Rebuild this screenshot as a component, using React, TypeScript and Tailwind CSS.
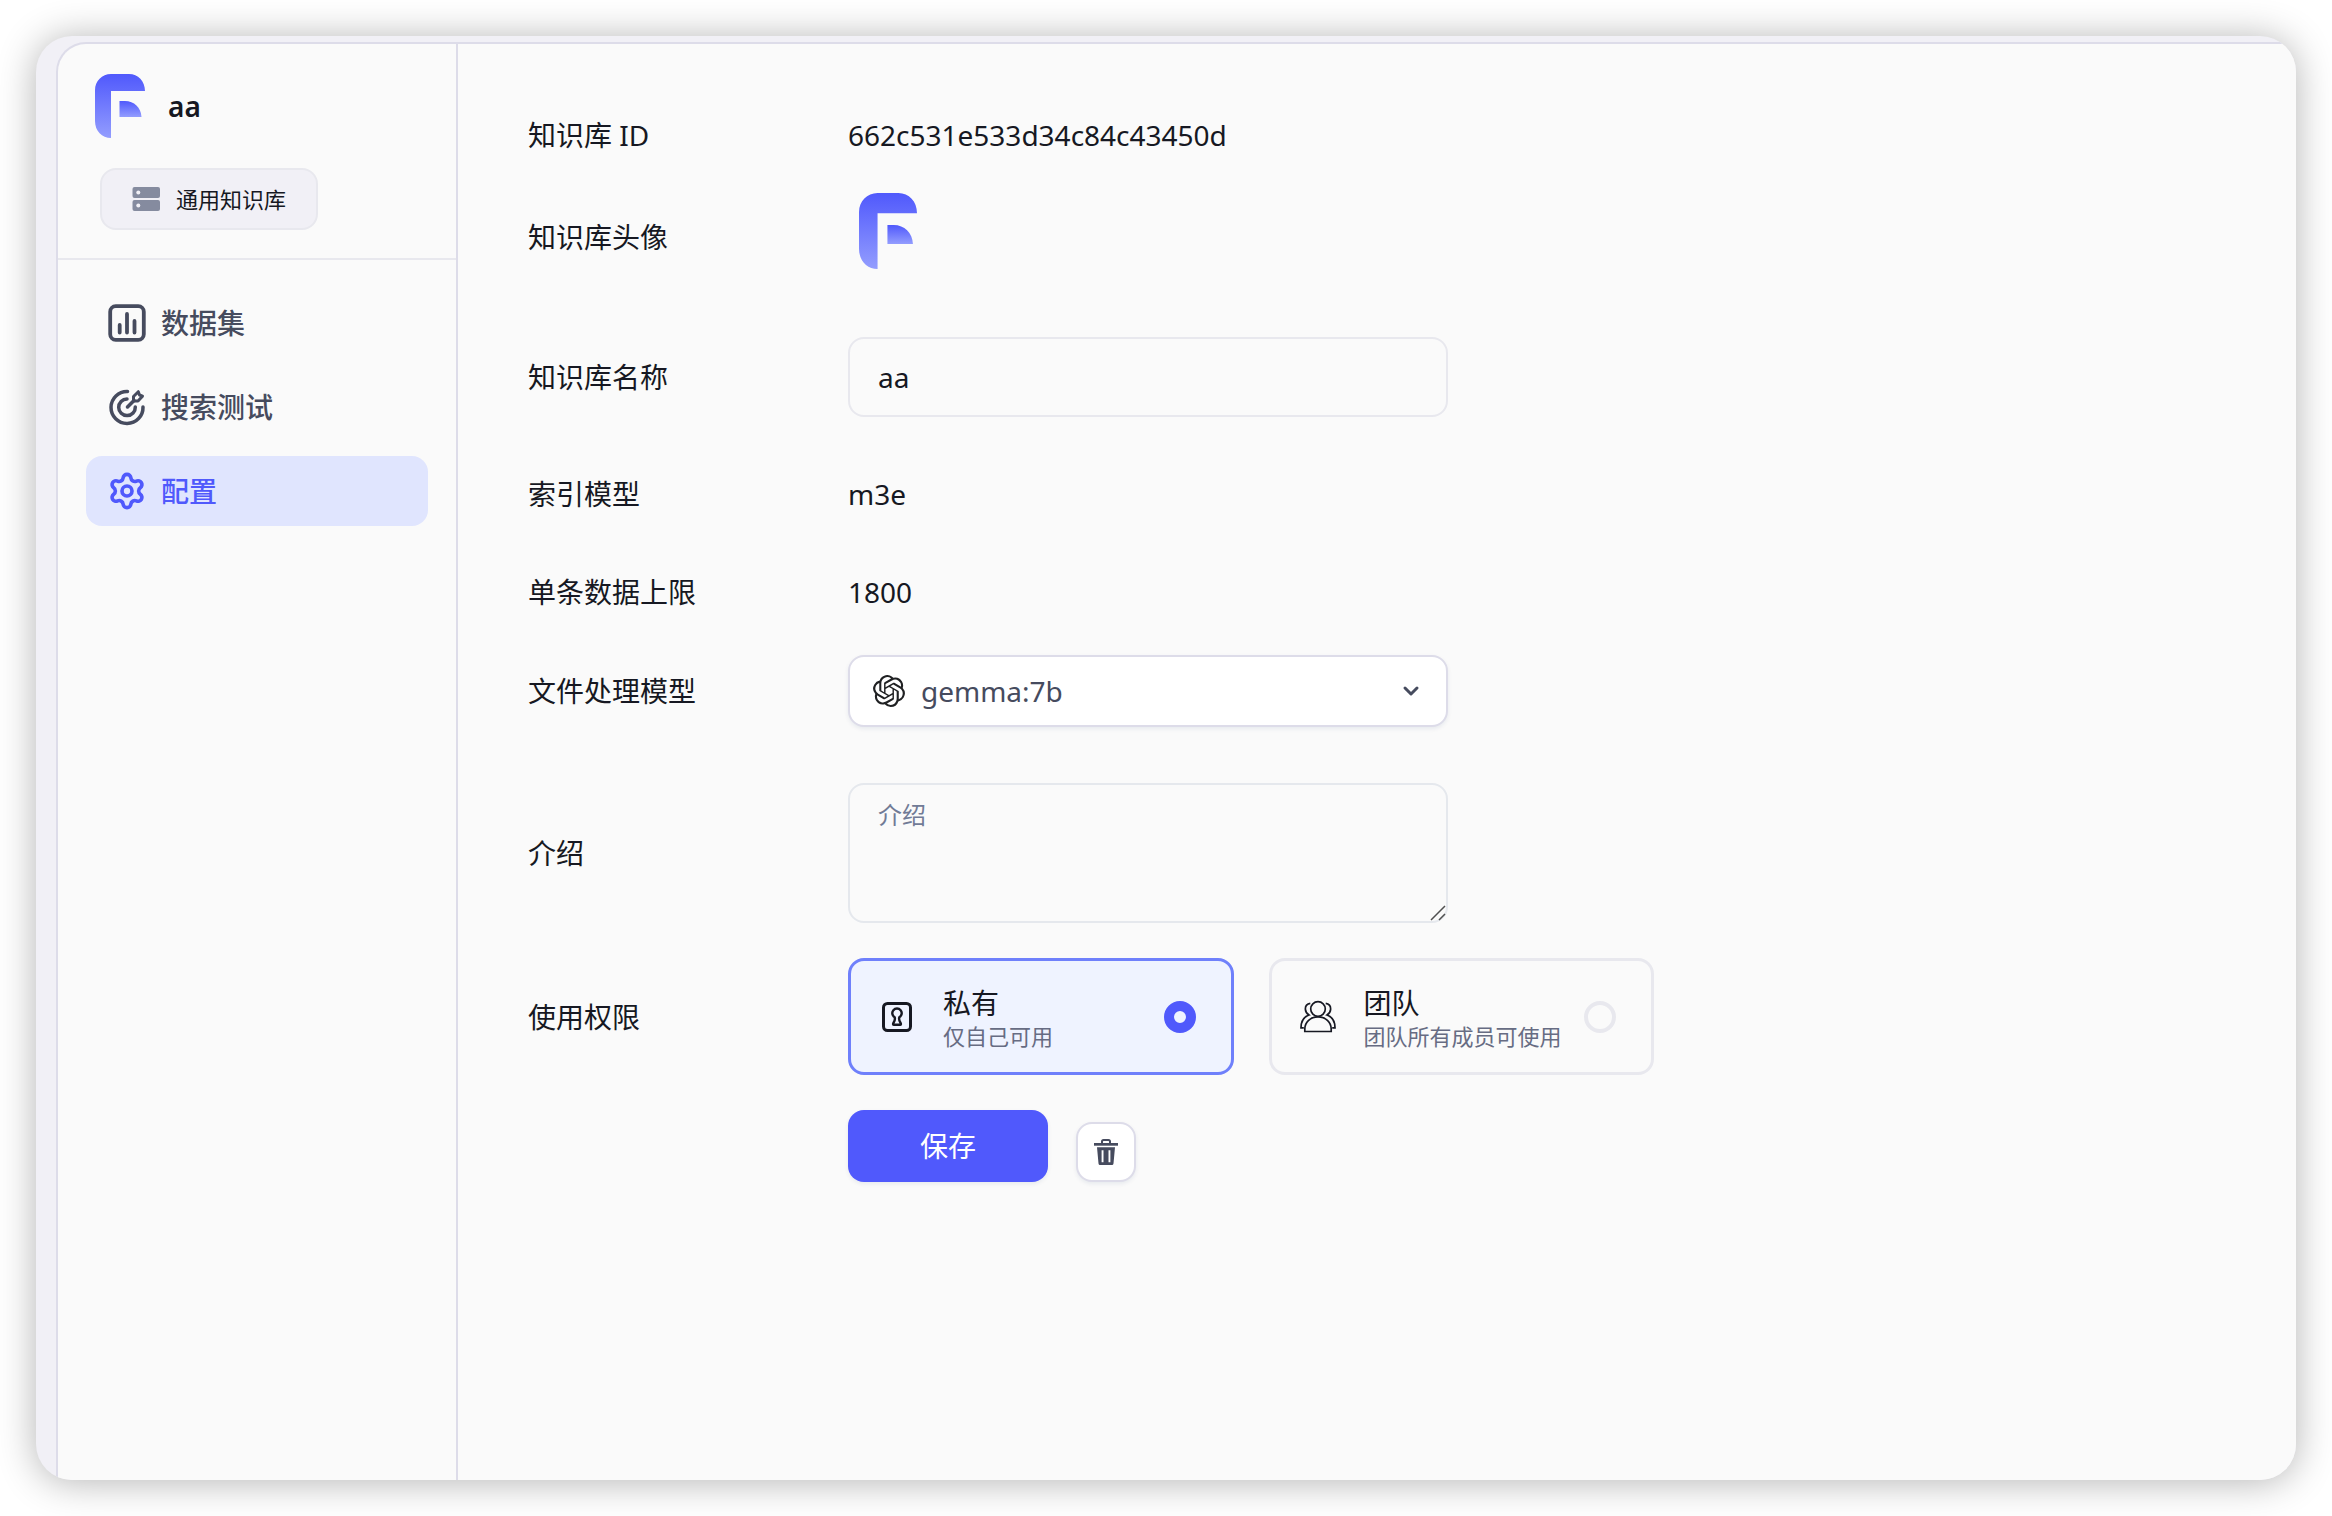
import { useId, useState } from 'react';
import type { ReactNode } from 'react';
import clsx from 'clsx';
import { ChevronDown, Settings } from 'lucide-react';
import { SiOpenai } from 'react-icons/si';

type IconProps = { className?: string };

function Logo({ className }: IconProps) {
  const id = useId();

  return (
    <svg className={className} viewBox="0 0 50 64" preserveAspectRatio="none" fill="none" aria-hidden="true">
      <path d="M0 16C0 7 7 0 16 0H34C43 0 50 7 50 17H16V64C7 64 0 57 0 47Z" fill={`url(#${id}a)`} />
      <path d="M24.5 27H30C39 27 46 33.5 46.5 43H24.5Z" fill={`url(#${id}b)`} />
      <defs>
        <linearGradient id={`${id}a`} x1="25" y1="0" x2="25" y2="64" gradientUnits="userSpaceOnUse">
          <stop stopColor="#5059fc" />
          <stop offset="1" stopColor="#939dfe" />
        </linearGradient>
        <linearGradient id={`${id}b`} x1="35" y1="27" x2="35" y2="43" gradientUnits="userSpaceOnUse">
          <stop stopColor="#5059fc" />
          <stop offset="1" stopColor="#939dfe" />
        </linearGradient>
      </defs>
    </svg>
  );
}

function DatabaseIcon({ className }: IconProps) {
  return (
    <svg className={className} viewBox="0 0 28 24" fill="currentColor" aria-hidden="true">
      <rect x="0.5" y="0" width="27.5" height="11" rx="2" />
      <rect x="0.5" y="13" width="27.5" height="11" rx="2" />
      <circle cx="6.3" cy="5.5" r="2" fill="#f1f0f6" />
      <circle cx="6.3" cy="18.5" r="2" fill="#f1f0f6" />
    </svg>
  );
}

function DatasetIcon({ className }: IconProps) {
  return (
    <svg className={className} viewBox="0 0 40 40" fill="none" stroke="currentColor" strokeWidth="3.8" strokeLinecap="round" aria-hidden="true">
      <rect x="3.2" y="3.2" width="33.6" height="33.6" rx="5.5" />
      <path d="M12.7 22V29.5M20 11V29.5M27.5 18V29.5" />
    </svg>
  );
}

function TargetIcon({ className }: IconProps) {
  return (
    <svg className={className} viewBox="0 0 40 40" fill="none" stroke="currentColor" strokeWidth="3.5" strokeLinecap="round" strokeLinejoin="round" aria-hidden="true">
      <path d="M20.500 4.500A16 16 0 1 0 36 20" />
      <path d="M20 12A8.300 8.300 0 1 0 28.300 20" />
      <path d="M20.500 20L27 13.500" />
      <path d="M26.500 14V9.500L31.300 4.700L32.500 8L35.500 9.200L31 14Z" strokeWidth="3" />
    </svg>
  );
}

function LockIcon({ className }: IconProps) {
  return (
    <svg className={className} viewBox="0 0 30 30" fill="none" stroke="currentColor" strokeLinejoin="round" aria-hidden="true">
      <rect x="1.5" y="1.5" width="27" height="27" rx="4" strokeWidth="3" />
      <path d="M12.7 15.3A4.7 4.7 0 1 1 17.3 15.3C16.7 17.2 17.2 18.5 18.3 20.3C19.3 22 19 22.8 18 22.8H12C11 22.8 10.7 22 11.7 20.3C12.8 18.5 13.3 17.2 12.7 15.3Z" strokeWidth="2.4" />
    </svg>
  );
}

function TeamIcon({ className }: IconProps) {
  return (
    <svg className={className} viewBox="0 0 36 36" fill="none" stroke="currentColor" strokeWidth="1.7" aria-hidden="true">
      <circle cx="18" cy="10" r="7.3" />
      <path d="M4.8 32.5V30C4.8 23 10.5 17.8 18 17.8S31.2 23 31.2 30V32.5Z" />
      <path d="M10.3 4.4C7 5 5.2 7.6 5.4 10.4C5.5 12.8 6.8 14.6 9 16C4 17.8 1 22 1 28.8H3.8" />
      <path d="M25.7 4.4C29 5 30.8 7.6 30.6 10.4C30.5 12.8 29.2 14.6 27 16C32 17.8 35 22 35 28.800H32.200" />
    </svg>
  );
}

function TrashIcon({ className }: IconProps) {
  return (
    <svg className={className} viewBox="0 0 28 28" fill="currentColor" aria-hidden="true">
      <path d="M2 5H26V7.7H2Z" />
      <path d="M10 5.5V3.5A1.5 1.5 0 0 1 11.5 2H16.5A1.5 1.5 0 0 1 18 3.5V5.5" fill="none" stroke="currentColor" strokeWidth="2" />
      <path
        fillRule="evenodd"
        d="M5 9.3H23L21.5 25.5Q21.3 27 20 27H8Q6.7 27 6.5 25.5ZM9.6 12.3V24.3H11.5V12.3ZM16.5 12.3V24.3H18.4V12.3Z"
      />
    </svg>
  );
}

function SettingIcon({ className }: IconProps) {
  return <Settings className={className} strokeWidth={2.2} />;
}

const navItems = [
  { id: 'dataset', label: '数据集', icon: DatasetIcon },
  { id: 'test', label: '搜索测试', icon: TargetIcon },
  { id: 'info', label: '配置', icon: SettingIcon },
];

const permissions = [
  { value: 'private', title: '私有', desc: '仅自己可用', icon: LockIcon, iconClass: 'w-[30px] h-[30px] mx-[3px]' },
  { value: 'public', title: '团队', desc: '团队所有成员可使用', icon: TeamIcon, iconClass: 'w-9 h-9' },
];

function Sidebar() {
  const [current, setCurrent] = useState('info');

  return (
    <aside className="w-[400px] shrink-0 border-r-2 border-[#dddce9]">
      <div className="pt-[30px] pb-7 border-b-2 border-[#e8e8ee]">
        <div className="flex items-center gap-[23px] pl-[37px]">
          <Logo className="w-[50px] h-16" />
          <h1 className="text-[28px] leading-[42px] font-semibold">aa</h1>
        </div>
        <div className="mt-[30px] ml-[42px] inline-flex items-center gap-4 h-[62px] px-[30px] rounded-2xl border-2 border-[#e8e8ee] bg-[#f1f0f6] align-top">
          <DatabaseIcon className="w-7 h-6 text-[#858b9f]" />
          <span className="text-[22px] leading-8">通用知识库</span>
        </div>
      </div>

      <nav className="flex flex-col gap-[14px] p-7">
        {navItems.map((item) => {
          const Icon = item.icon;
          const isActive = current === item.id;

          return (
            <button
              key={item.id}
              type="button"
              onClick={() => setCurrent(item.id)}
              className={clsx(
                'flex items-center gap-[14px] h-[70px] px-[21px] rounded-2xl text-[28px] leading-[42px] font-medium',
                isActive ? 'bg-[#e0e5fe] text-[#5059fc]' : 'text-[#464b5e]'
              )}
            >
              <Icon className="w-10 h-10" />
              {item.label}
            </button>
          );
        })}
      </nav>
    </aside>
  );
}

function Row({ label, htmlFor, children }: { label: string; htmlFor?: string; children: ReactNode }) {
  return (
    <div className="flex items-center">
      {htmlFor ? (
        <label htmlFor={htmlFor} className="w-80 shrink-0">
          {label}
        </label>
      ) : (
        <div className="w-80 shrink-0">{label}</div>
      )}
      {children}
    </div>
  );
}

function Info() {
  const [name, setName] = useState('aa');
  const [intro, setIntro] = useState('');
  const [permission, setPermission] = useState('private');

  return (
    <main className="flex-1 min-w-0 pt-[70px] pl-[70px] pr-10 pb-10 text-[28px] leading-[42px]">
      <form onSubmit={(e) => e.preventDefault()}>
        <Row label="知识库 ID">
          <div>662c531e533d34c84c43450d</div>
        </Row>

        <div className="mt-[37px]">
          <Row label="知识库头像">
            <div className="h-[88px] pl-[11px]">
              <Logo className="w-[58px] h-[76px]" />
            </div>
          </Row>
        </div>

        <div className="mt-14">
          <Row label="知识库名称" htmlFor="name">
            <input
              id="name"
              value={name}
              onChange={(e) => setName(e.target.value)}
              className="w-full max-w-[600px] h-20 px-7 rounded-2xl border-2 border-[#e8e8ee] bg-transparent outline-none"
            />
          </Row>
        </div>

        <div className="mt-14">
          <Row label="索引模型">
            <div>m3e</div>
          </Row>
        </div>

        <div className="mt-14">
          <Row label="单条数据上限">
            <div>1800</div>
          </Row>
        </div>

        <div className="mt-[42px]">
          <Row label="文件处理模型" htmlFor="model">
            <div className="relative w-full max-w-[600px]">
              <select
                id="model"
                className="appearance-none w-full h-[72px] pl-[71px] pr-16 rounded-2xl border-2 border-[#dddce9] bg-white text-[#464b5e] shadow-[0_2px_4px_rgba(19,51,107,0.08)] outline-none"
              >
                <option>gemma:7b</option>
              </select>
              <SiOpenai className="absolute left-[25px] top-5 w-8 h-8 text-[#202123] pointer-events-none" />
              <ChevronDown className="absolute right-[25px] top-6 w-6 h-6 text-[#464b5e] pointer-events-none" strokeWidth={3} />
            </div>
          </Row>
        </div>

        <div className="mt-14">
          <Row label="介绍" htmlFor="intro">
            <div className="relative w-full max-w-[600px]">
              <textarea
                id="intro"
                value={intro}
                placeholder="介绍"
                onChange={(e) => setIntro(e.target.value)}
                className="block w-full h-[140px] px-7 py-3 rounded-2xl border-2 border-[#e5e8ed] bg-transparent text-2xl leading-9 placeholder:text-[#717b96] resize-y outline-none [&::-webkit-resizer]:bg-transparent"
              />
              {/* Resize grip */}
              <svg
                className="absolute right-[2px] bottom-[2px] w-4 h-4 text-[#505050] pointer-events-none"
                viewBox="0 0 16 16"
                stroke="currentColor"
                strokeWidth="1.5"
                aria-hidden="true"
              >
                <path d="M1 15L15 1M9 15L15 9" />
              </svg>
            </div>
          </Row>
        </div>

        <div className="mt-[35px]">
          <Row label="使用权限">
            <div className="grid grid-cols-2 gap-[35px] w-full max-w-[806px]" role="radiogroup" aria-label="使用权限">
              {permissions.map((item) => {
                const Icon = item.icon;
                const isActive = permission === item.value;

                return (
                  <label
                    key={item.value}
                    className={clsx(
                      'flex items-center h-[117px] pl-7 pr-[35px] rounded-2xl border-3 cursor-pointer',
                      isActive ? 'border-[#6f80fb] bg-[#eff3ff]' : 'border-[#e8e8ee]'
                    )}
                  >
                    <Icon className={clsx('shrink-0', item.iconClass)} />
                    <span className="flex-1 ml-7 pt-[3px] whitespace-nowrap">
                      <span className="block leading-9">{item.title}</span>
                      <span className="block text-[22px] leading-[30px] text-[#676c83]">{item.desc}</span>
                    </span>
                    <input
                      type="radio"
                      name="permission"
                      value={item.value}
                      checked={isActive}
                      onChange={() => setPermission(item.value)}
                      className="appearance-none shrink-0 w-8 h-8 rounded-full border-4 border-[#e8e8ee] checked:border-10 checked:border-[#5059fc]"
                    />
                  </label>
                );
              })}
            </div>
          </Row>
        </div>

        <div className="mt-[35px] ml-80 flex items-end gap-7">
          <button type="submit" className="w-[200px] h-[72px] rounded-2xl bg-[#5059fc] text-white shadow-[0_2px_4px_rgba(19,51,107,0.08)]">
            保存
          </button>
          <button
            type="button"
            aria-label="删除"
            className="flex items-center justify-center w-[60px] h-[60px] rounded-2xl border-2 border-[#dddce9] bg-white text-[#464b5e] shadow-[0_2px_4px_rgba(19,51,107,0.08)]"
          >
            <TrashIcon className="w-7 h-7" />
          </button>
        </div>
      </form>
    </main>
  );
}

export default function App() {
  return (
    <div className="flex min-h-screen p-9 bg-white font-['Noto_Sans','Noto_Sans_CJK_SC',sans-serif] text-[#161822]">
      <div className="flex flex-1 min-w-0 pt-[6px] pl-5 rounded-[36px] overflow-hidden bg-[#f1f0f6] shadow-[0_2px_38px_rgba(0,0,0,0.3)]">
        <div className="flex flex-1 min-w-0 rounded-tl-[30px] border-t-2 border-l-2 border-[#dddce9] bg-[#fafafa]">
          <Sidebar />
          <Info />
        </div>
      </div>
    </div>
  );
}
